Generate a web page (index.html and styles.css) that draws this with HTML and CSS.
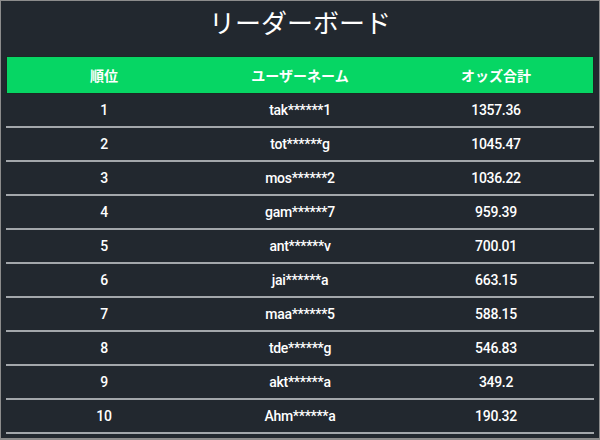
FILE: index.html
```html
<!DOCTYPE html>
<html lang="ja">
<head>
<meta charset="utf-8">
<title>リーダーボード</title>
<link rel="stylesheet" href="styles.css">
</head>
<body>
<div class="frame">
  <h1 class="title">リーダーボード</h1>
  <table class="board">
    <thead>
      <tr><th>順位</th><th>ユーザーネーム</th><th>オッズ合計</th></tr>
    </thead>
    <tbody>
      <tr><td>1</td><td>tak******1</td><td>1357.36</td></tr>
      <tr><td>2</td><td>tot******g</td><td>1045.47</td></tr>
      <tr><td>3</td><td>mos******2</td><td>1036.22</td></tr>
      <tr><td>4</td><td>gam******7</td><td>959.39</td></tr>
      <tr><td>5</td><td>ant******v</td><td>700.01</td></tr>
      <tr><td>6</td><td>jai******a</td><td>663.15</td></tr>
      <tr><td>7</td><td>maa******5</td><td>588.15</td></tr>
      <tr><td>8</td><td>tde******g</td><td>546.83</td></tr>
      <tr><td>9</td><td>akt******a</td><td>349.2</td></tr>
      <tr><td>10</td><td>Ahm******a</td><td>190.32</td></tr>
    </tbody>
  </table>
</div>
</body>
</html>
```
FILE: styles.css
```css
html, body {
  margin: 0;
  padding: 0;
  background: #22282f;
}
.frame {
  box-sizing: border-box;
  width: 600px;
  height: 440px;
  border: 1px solid #8c8c8c;
  border-bottom-width: 2px;
  background: #22282f;
  padding: 0 5px;
  overflow: hidden;
  font-family: Roboto, "Noto Sans CJK JP", sans-serif;
  color: #ffffff;
}
.title {
  margin: 0;
  height: 55px;
  line-height: 44px;
  text-align: center;
  font-family: "Noto Sans", "Noto Sans CJK JP", sans-serif;
  font-weight: 400;
  font-size: 26px;
  color: #ffffff;
}
.board {
  width: 100%;
  border-collapse: collapse;
  table-layout: fixed;
}
.board th {
  background: #06d664;
  height: 38px;
  padding: 0;
  font-family: "Noto Sans CJK JP", sans-serif;
  font-weight: 700;
  font-size: 14px;
  color: #ffffff;
  text-align: center;
  box-shadow: inset 0 1px 0 #1c2a24, inset 0 -1px 0 #1c2a24;
}
.board th:first-child { box-shadow: inset 1px 1px 0 #1c2a24, inset 0 -1px 0 #1c2a24; }
.board th:last-child { box-shadow: inset -1px 1px 0 #1c2a24, inset 0 -1px 0 #1c2a24; }
.board td {
  height: 32px;
  padding: 0;
  text-align: center;
  font-size: 14px;
  font-weight: 500;
  letter-spacing: -0.3px;
  color: #ffffff;
  border-bottom: 2px solid #a3a7ab;
}
```
